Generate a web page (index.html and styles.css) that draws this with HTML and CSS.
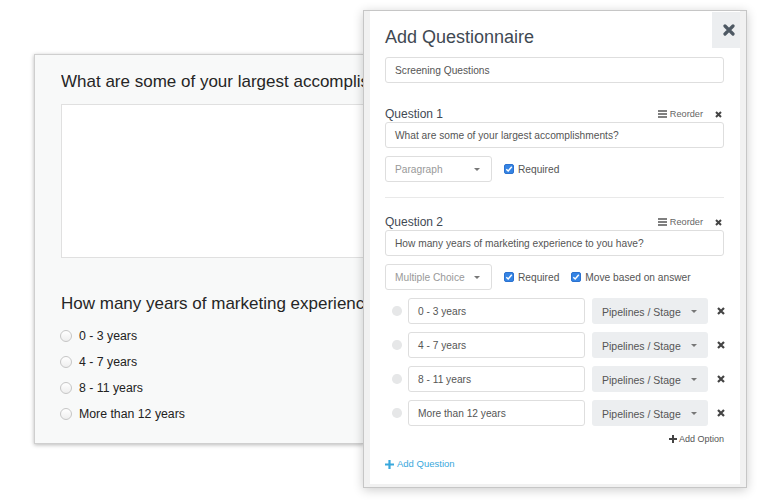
FILE: index.html
```html
<!DOCTYPE html>
<html>
<head>
<meta charset="utf-8">
<title>Add Questionnaire</title>
<link rel="stylesheet" href="styles.css">
</head>
<body>
<div class="stage">
  <section class="card">
    <h2 class="card-q">What are some of your largest accomplishments?</h2>
    <div class="textarea"></div>
    <h2 class="card-q card-q2">How many years of marketing experience to you have?</h2>
    <ul class="radios">
      <li><span class="radio"></span>0 - 3 years</li>
      <li><span class="radio"></span>4 - 7 years</li>
      <li><span class="radio"></span>8 - 11 years</li>
      <li><span class="radio"></span>More than 12 years</li>
    </ul>
  </section>

  <div class="modal">
    <div class="panel">
      <button class="close" type="button">
        <svg width="12" height="12" viewBox="0 0 12 12"><path d="M2 2L10 10M10 2L2 10" stroke="#4d5863" stroke-width="3.2" stroke-linecap="round"/></svg>
      </button>
      <h1 class="title">Add Questionnaire</h1>
      <div class="field">Screening Questions</div>

      <div class="question">
        <div class="q-head">
          <span class="q-label">Question 1</span>
          <span class="reorder"><svg width="9" height="8" viewBox="0 0 9 8"><path d="M0 1H9M0 4H9M0 7H9" stroke="#555" stroke-width="1.3"/></svg>Reorder</span>
          <svg class="x-sm" width="7" height="7" viewBox="0 0 7 7"><path d="M1 1L6 6M6 1L1 6" stroke="#444" stroke-width="2"/></svg>
        </div>
        <div class="field">What are some of your largest accomplishments?</div>
        <div class="q-opts">
          <div class="select">Paragraph<span class="caret"></span></div>
          <span class="check"><span class="box"><svg width="8" height="8" viewBox="0 0 8 8"><path d="M1.3 4.2L3.2 6L6.8 1.8" fill="none" stroke="#fff" stroke-width="1.5"/></svg></span>Required</span>
        </div>
      </div>

      <div class="question">
        <div class="q-head">
          <span class="q-label">Question 2</span>
          <span class="reorder"><svg width="9" height="8" viewBox="0 0 9 8"><path d="M0 1H9M0 4H9M0 7H9" stroke="#555" stroke-width="1.3"/></svg>Reorder</span>
          <svg class="x-sm" width="7" height="7" viewBox="0 0 7 7"><path d="M1 1L6 6M6 1L1 6" stroke="#444" stroke-width="2"/></svg>
        </div>
        <div class="field">How many years of marketing experience to you have?</div>
        <div class="q-opts">
          <div class="select">Multiple Choice<span class="caret"></span></div>
          <span class="check"><span class="box"><svg width="8" height="8" viewBox="0 0 8 8"><path d="M1.3 4.2L3.2 6L6.8 1.8" fill="none" stroke="#fff" stroke-width="1.5"/></svg></span>Required</span>
          <span class="check"><span class="box"><svg width="8" height="8" viewBox="0 0 8 8"><path d="M1.3 4.2L3.2 6L6.8 1.8" fill="none" stroke="#fff" stroke-width="1.5"/></svg></span>Move based on answer</span>
        </div>

        <div class="options">
          <div class="opt">
            <span class="dot"></span>
            <div class="field">0 - 3 years</div>
            <div class="stage-sel">Pipelines / Stage<span class="caret"></span></div>
            <svg class="x-opt" width="8" height="8" viewBox="0 0 8 8"><path d="M1 1L7 7M7 1L1 7" stroke="#444" stroke-width="2.2"/></svg>
          </div>
          <div class="opt">
            <span class="dot"></span>
            <div class="field">4 - 7 years</div>
            <div class="stage-sel">Pipelines / Stage<span class="caret"></span></div>
            <svg class="x-opt" width="8" height="8" viewBox="0 0 8 8"><path d="M1 1L7 7M7 1L1 7" stroke="#444" stroke-width="2.2"/></svg>
          </div>
          <div class="opt">
            <span class="dot"></span>
            <div class="field">8 - 11 years</div>
            <div class="stage-sel">Pipelines / Stage<span class="caret"></span></div>
            <svg class="x-opt" width="8" height="8" viewBox="0 0 8 8"><path d="M1 1L7 7M7 1L1 7" stroke="#444" stroke-width="2.2"/></svg>
          </div>
          <div class="opt">
            <span class="dot"></span>
            <div class="field">More than 12 years</div>
            <div class="stage-sel">Pipelines / Stage<span class="caret"></span></div>
            <svg class="x-opt" width="8" height="8" viewBox="0 0 8 8"><path d="M1 1L7 7M7 1L1 7" stroke="#444" stroke-width="2.2"/></svg>
          </div>
        </div>

        <div class="add-option"><svg width="8" height="8" viewBox="0 0 8 8"><path d="M4 0V8M0 4H8" stroke="#444" stroke-width="2"/></svg>Add Option</div>
      </div>

      <div class="add-question"><svg width="9" height="9" viewBox="0 0 9 9"><path d="M4.5 0V9M0 4.5H9" stroke="#3aa8dc" stroke-width="2.2"/></svg>Add Question</div>
    </div>
  </div>
</div>
</body>
</html>
```

FILE: styles.css
```css
* { box-sizing: border-box; }

html, body {
  margin: 0;
  padding: 0;
  background: #fff;
  font-family: "Liberation Sans", Arial, Helvetica, sans-serif;
}

.stage {
  position: relative;
  width: 778px;
  height: 500px;
  overflow: hidden;
  padding: 54px 0 0 34px;
}

/* Background form card (its right part is hidden under the modal) */
.card {
  width: 330px;
  background: #f8f9f9;
  border: 1px solid #cfcfcf;
  box-shadow: 0 1px 4px rgba(0, 0, 0, 0.28);
  padding: 17px 0 16px 26px;
  overflow: hidden;
}

.card-q {
  margin: 0;
  font-size: 17px;
  line-height: 20px;
  font-weight: normal;
  color: #262626;
  white-space: nowrap;
  overflow: hidden;
}

.card-q2 { margin-top: 36px; }

.textarea {
  margin-top: 12px;
  height: 154px;
  background: #fff;
  border: 1px solid #e0e0e0;
  border-right: 0;
}

.radios {
  list-style: none;
  margin: 9px 0 0 -1px;
  padding: 0;
}

.radios li {
  height: 26px;
  display: flex;
  align-items: center;
  gap: 7px;
  font-size: 12.3px;
  color: #222;
}

.radio {
  width: 12px;
  height: 12px;
  border-radius: 50%;
  border: 1px solid #c6c6c6;
  background: linear-gradient(#ffffff, #eeeeee);
}

/* Modal */
.modal {
  position: absolute;
  left: 363px;
  top: 10px;
  width: 384px;
  height: 478px;
  border: 1px solid #c6c6c6;
  background: #f1f1f1;
  padding: 0 6px 3px 6px;
  box-shadow: 0 2px 10px rgba(0, 0, 0, 0.2);
}

.panel {
  position: relative;
  height: 100%;
  background: #fff;
  padding: 15px 16px 0 15px;
}

.close {
  position: absolute;
  top: 1px;
  right: 0;
  width: 28px;
  height: 36px;
  border: 0;
  padding: 0 0 0 6px;
  background: #eceef0;
  display: flex;
  align-items: center;
  justify-content: center;
}

.title {
  margin: 0 0 9px 0;
  font-size: 18px;
  line-height: 22px;
  font-weight: normal;
  color: #3f4953;
}

.field {
  height: 26px;
  border: 1px solid #dedede;
  border-radius: 3px;
  padding: 1px 9px 0;
  display: flex;
  align-items: center;
  font-size: 10.2px;
  color: #555;
  white-space: nowrap;
  overflow: hidden;
}

.question { margin-top: 22px; }

.question + .question {
  margin-top: 15px;
  border-top: 1px solid #e9e9e9;
  padding-top: 15px;
}

.q-head {
  display: flex;
  align-items: center;
  height: 16px;
  margin-bottom: 1px;
  padding-top: 1px;
}

.q-label {
  flex: 1;
  font-size: 12px;
  color: #3f4953;
}

.reorder {
  display: flex;
  align-items: center;
  gap: 3px;
  font-size: 9.2px;
  color: #666;
}

.x-sm { margin: 1px 2px 0 12px; }

.q-opts {
  display: flex;
  align-items: center;
  margin-top: 8px;
}

.select {
  width: 107px;
  height: 26px;
  border: 1px solid #dedede;
  border-radius: 3px;
  padding: 1px 11px 0 9px;
  display: flex;
  align-items: center;
  justify-content: space-between;
  font-size: 10.2px;
  color: #999;
}

.caret {
  width: 0;
  height: 0;
  border-left: 3px solid transparent;
  border-right: 3px solid transparent;
  border-top: 3px solid #777;
}

.check {
  display: flex;
  align-items: center;
  gap: 4px;
  margin-left: 12px;
  font-size: 10.2px;
  color: #555;
}

.box {
  width: 10px;
  height: 10px;
  border-radius: 2px;
  background: #3584e4;
  border: 1px solid #2c72cf;
  display: flex;
  align-items: center;
  justify-content: center;
}

.options {
  margin-top: 8px;
  display: flex;
  flex-direction: column;
  gap: 8px;
}

.opt {
  display: grid;
  grid-template-columns: 9px 177px 116px 1fr;
  column-gap: 7px;
  align-items: center;
  padding-left: 7px;
  height: 26px;
}

.dot {
  width: 9.5px;
  height: 9.5px;
  border-radius: 50%;
  background: #e6e7e8;
}

.stage-sel {
  height: 26px;
  border-radius: 3px;
  background: #eceef0;
  padding: 1px 11px 0 10px;
  display: flex;
  align-items: center;
  justify-content: space-between;
  font-size: 10.5px;
  color: #555;
}

.x-opt { justify-self: center; margin-left: 2px; }

.add-option {
  margin-top: 7px;
  display: flex;
  justify-content: flex-end;
  align-items: center;
  gap: 2px;
  font-size: 9px;
  line-height: 12px;
  color: #555;
}

.add-question {
  margin-top: 12px;
  display: flex;
  align-items: center;
  gap: 3px;
  font-size: 9.5px;
  line-height: 14px;
  color: #3aa8dc;
}
```
